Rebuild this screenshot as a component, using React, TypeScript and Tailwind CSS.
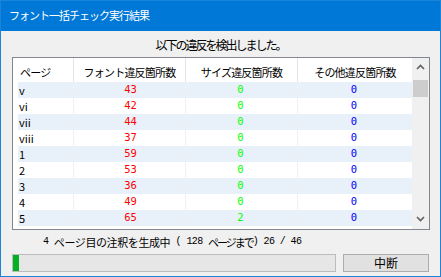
type Row = {
    page: string;
    font: number;
    size: number;
    other: number;
};

const ROWS: Row[] = [
    { page: 'v', font: 43, size: 0, other: 0 },
    { page: 'vi', font: 42, size: 0, other: 0 },
    { page: 'vii', font: 44, size: 0, other: 0 },
    { page: 'viii', font: 37, size: 0, other: 0 },
    { page: '1', font: 59, size: 0, other: 0 },
    { page: '2', font: 53, size: 0, other: 0 },
    { page: '3', font: 36, size: 0, other: 0 },
    { page: '4', font: 49, size: 0, other: 0 },
    { page: '5', font: 65, size: 2, other: 0 },
];

const NUM = "font-['DejaVu_Sans_Mono',monospace] text-[10.5px]";
const MONO = "font-['Liberation_Mono',monospace] text-[10px] tracking-[-0.6px]";

function ScrollBar() {
    return (
        <div className="flex w-[17px] shrink-0 flex-col bg-[#f0f0f0]">
            <div className="flex h-[17px] items-center justify-center pt-[1px]">
                <svg width="9" height="6" viewBox="0 0 9 6">
                    <path
                        d="M1 5 L4.5 1.5 L8 5"
                        fill="none"
                        stroke="#606060"
                        strokeWidth="1.6"
                    />
                </svg>
            </div>
            <div className="mx-[1px] mt-[5px] h-[17px] bg-[#cdcdcd]" />
            <div className="flex-1" />
            <div className="flex h-[17px] items-center justify-center pb-[4px]">
                <svg width="9" height="6" viewBox="0 0 9 6">
                    <path
                        d="M1 1 L4.5 4.5 L8 1"
                        fill="none"
                        stroke="#606060"
                        strokeWidth="1.6"
                    />
                </svg>
            </div>
        </div>
    );
}

export default function App() {
    return (
        <div className="flex h-[277px] w-[441px] flex-col border border-[#1a84d8] bg-[#f0f0f0] font-['Noto_Sans_CJK_JP',sans-serif] text-black">
            <div className="flex h-[30px] shrink-0 items-center bg-[#0078d7] pl-[8px] pb-[1px] text-[11px] tracking-[-1px] text-white">
                フォント一括チェック実行結果
            </div>

            <div className="flex h-[26px] shrink-0 justify-center pt-[6px] text-[12px] leading-[16px] tracking-[-2px]">
                以下の違反を検出しました。
            </div>

            <div className="ml-[11px] flex h-[173px] w-[418px] shrink-0 border border-[#828790] bg-white">
                <div className="flex min-w-0 flex-1 flex-col overflow-hidden">
                    <div className="flex h-[24px] shrink-0 text-[11px] leading-[16px] tracking-[-0.8px]">
                        <div className="flex w-[60px] items-center pl-[7px] pt-[3px]">
                            ページ
                        </div>
                        <div className="flex w-[112px] items-center justify-center border-l border-[#e5e5e5] pt-[3px]">
                            フォント違反箇所数
                        </div>
                        <div className="flex w-[112px] items-center justify-center border-l border-[#e5e5e5] pt-[3px]">
                            サイズ違反箇所数
                        </div>
                        <div className="flex flex-1 items-center justify-center border-l border-[#e5e5e5] pt-[3px]">
                            その他違反箇所数
                        </div>
                    </div>

                    {ROWS.map((row, i) => (
                        <div
                            key={row.page}
                            className="flex h-[16px] shrink-0"
                        >
                            <div className="w-[5px] shrink-0" />
                            <div
                                className={`flex min-w-0 flex-1 ${
                                    i % 2 === 0 ? 'bg-[#e8f1fa]' : 'bg-white'
                                }`}
                            >
                                <div className="flex w-[55px] items-center pl-[1px] text-[11px] leading-[16px]">
                                    {row.page}
                                </div>
                                <div className={`flex w-[112px] items-center justify-center border-l border-[#f0f0f0] pl-[2px] text-[#ff0000] ${NUM}`}>
                                    {row.font}
                                </div>
                                <div className={`flex w-[112px] items-center justify-center border-l border-[#f0f0f0] pr-[2px] text-[#00ff00] ${NUM}`}>
                                    {row.size}
                                </div>
                                <div className={`flex flex-1 items-center justify-center border-l border-[#f0f0f0] pr-[2px] text-[#0000ff] ${NUM}`}>
                                    {row.other}
                                </div>
                            </div>
                        </div>
                    ))}
                </div>

                <ScrollBar />
            </div>

            <div className="mt-[4px] flex h-[16px] shrink-0 items-center whitespace-pre pl-[42px] text-[11px] leading-[16px] tracking-[-0.4px]">
                <span className={MONO}>{'4 '}</span>
                <span>ページ目の注釈を生成中</span>
                <span className={MONO}>{' ( 128 '}</span>
                <span className="tracking-[-2px]">ページまで</span>
                <span className={MONO}>{') 26 / 46'}</span>
            </div>

            <div className="ml-[11px] mt-[4px] flex h-[18px] shrink-0 items-stretch gap-[7px]">
                <div className="flex w-[324px] border border-[#bcbcbc] bg-[#e6e6e6]">
                    <div className="w-[6px] bg-[#06b025]" />
                </div>
                <button className="flex w-[86px] items-center justify-center border border-[#adadad] bg-[#e1e1e1] text-[12px] leading-[16px]">
                    中断
                </button>
            </div>
        </div>
    );
}
